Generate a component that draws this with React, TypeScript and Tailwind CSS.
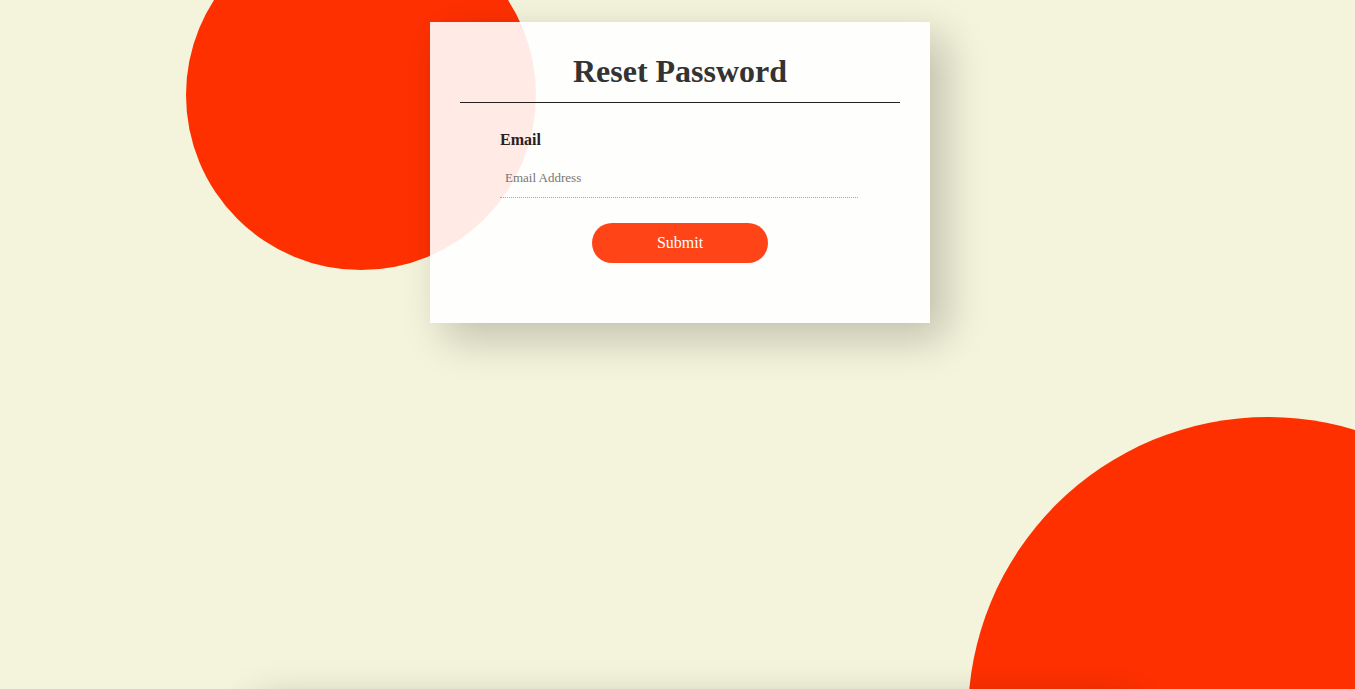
import React from "react";

const ResetPassword = () => {
  return (
    <div className="relative h-screen overflow-hidden bg-[#f4f4dc] font-['Liberation_Serif',serif]">
      <div className="absolute left-[186px] top-[-80px] w-[350px] h-[350px] rounded-full bg-[#ff3000]" />
      <div className="absolute left-[968px] top-[417px] w-[600px] h-[600px] rounded-full bg-[#ff3000]" />

      <div className="relative z-10 pt-[22px]">
        <div className="ml-[430px] w-[500px] bg-white/90 shadow-[15px_15px_40px_rgba(0,0,0,0.22)] pt-[31px] pb-[60px]">
          <h1 className="text-center text-[32px] leading-[36px] font-bold text-[#333]">Reset Password</h1>
          <div className="mx-[30px] mt-[13px] h-px bg-[#222]" />

          <form className="mt-[27px] px-[70px]" onSubmit={(e) => e.preventDefault()}>
            <label className="block text-[16px] leading-[20px] font-bold text-[#2a2020]">Email</label>
            <input
              type="email"
              placeholder="Email Address"
              className="mt-[9px] block w-[358px] h-[39px] pl-[5px] pb-[1px] bg-transparent text-[13px] text-[#333] placeholder:text-[#757575] border-b border-dotted border-[#aaa] outline-none"
            />
            <div className="mt-[25px] flex justify-center">
              <button
                type="submit"
                className="w-[176px] h-[40px] rounded-full bg-[#ff4518] text-white text-[16px]"
              >
                Submit
              </button>
            </div>
          </form>
        </div>

        <div className="mt-[368px] ml-[240px] w-[880px] h-[400px] bg-[#f4f4dc] shadow-[15px_15px_40px_rgba(0,0,0,0.3)]" />
      </div>
    </div>
  );
};

export default ResetPassword;
